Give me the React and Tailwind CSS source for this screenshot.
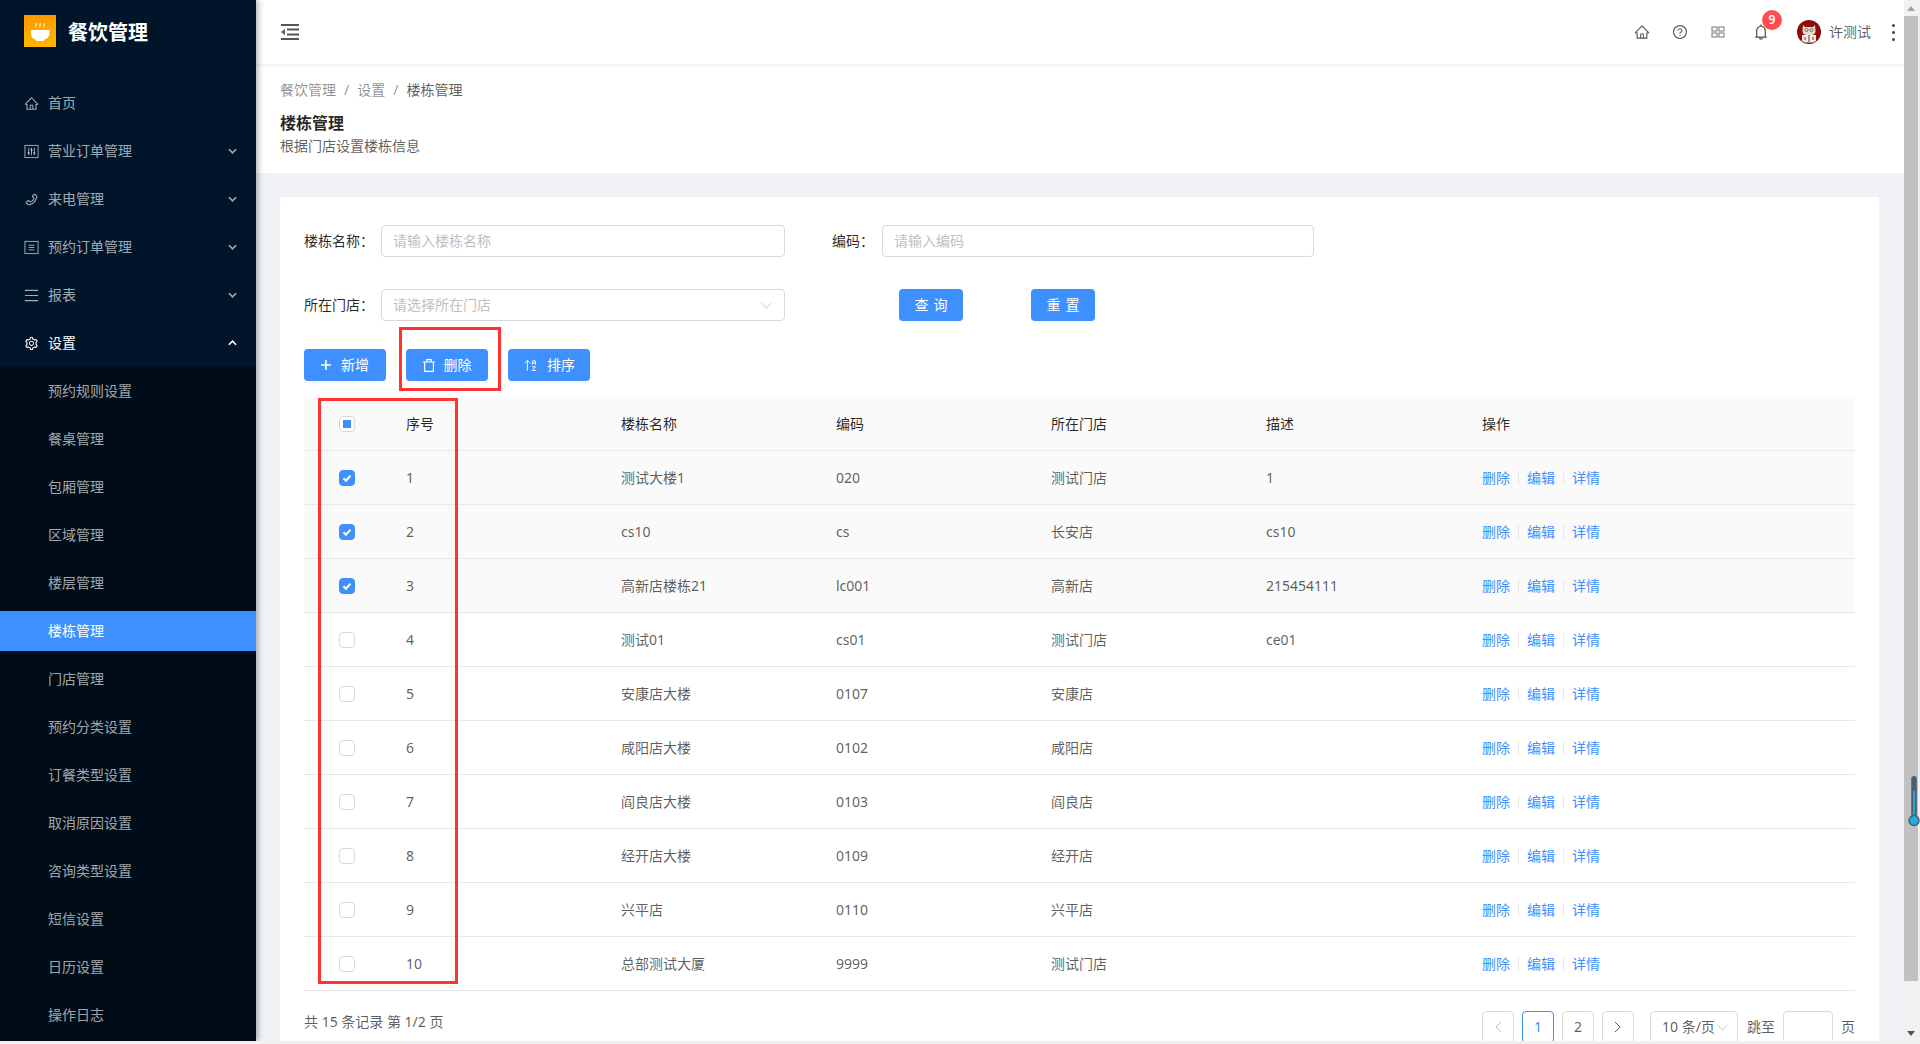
import React from 'react';
import { AiOutlineHome, AiOutlineSetting, AiOutlinePhone, AiOutlineQuestionCircle, AiOutlineBell } from 'react-icons/ai';
import { ArrowUpAZ } from 'lucide-react';

const SlidersIcon = () => (
  <svg viewBox="0 0 16 16" className="w-[15px] h-[15px]" fill="none" stroke="currentColor">
    <rect x="1" y="1.5" width="14" height="13" />
    <path d="M5 4v8M8 4v8M11 4v8" />
    <path d="M4 9.5h2M7 6.5h2M10 9.5h2" strokeWidth="1.6" />
  </svg>
);

const ProfileIcon = () => (
  <svg viewBox="0 0 16 16" className="w-[15px] h-[15px]" fill="none" stroke="currentColor">
    <rect x="1" y="1.5" width="14" height="13" />
    <path d="M5 5.5h6M5 8h6M5 10.5h6" />
  </svg>
);

const LinesIcon = () => (
  <svg viewBox="0 0 16 16" className="w-[15px] h-[15px]" fill="none" stroke="currentColor" strokeWidth="1.3">
    <path d="M1 2.5h14M1 8h14M1 13.5h14" />
  </svg>
);

const Chevron = ({ up, className }) => (
  <svg viewBox="0 0 10 6" className={`w-[9px] h-[6px] ${className}`} fill="none" stroke="currentColor" strokeWidth="1.7">
    <path d={up ? 'M1 5l4-4 4 4' : 'M1 1l4 4 4-4'} />
  </svg>
);

const TrashIcon = () => (
  <svg viewBox="0 0 12 13" className="w-3 h-[13px]" fill="none" stroke="currentColor" strokeWidth="1.2">
    <path d="M0 3h12M1.600 3v9.400h8.800V3M3.800 3V.7h4.400V3" />
  </svg>
);

const PlusIcon = () => (
  <svg viewBox="0 0 10 10" className="w-[10px] h-[10px]" fill="none" stroke="currentColor" strokeWidth="1.6">
    <path d="M5 0v10M0 5h10" />
  </svg>
);

const FoldIcon = () => (
  <svg viewBox="0 0 18 16" className="w-[18px] h-4 ml-px text-[#555]" fill="currentColor">
    <path d="M0 0h18v2H0zM0 14h18v2H0zM6 4.600h12v1.800H6zM6 9.600h12v1.800H6zM0 8l4-3v6z" />
  </svg>
);

const Logo = () => (
  <div className="w-8 h-8 bg-gradient-to-b from-[#ff9800] to-[#ffb700] flex items-center justify-center shrink-0">
    <svg viewBox="0 0 32 32" className="w-8 h-8">
      <path d="M7 15h18.5v3.5c0 3.500-2.500 5.500-5 6l-1 1.500h-7l-1-1.500c-2.500-.5-4.500-2.500-4.500-6z" fill="#fff" />
      <path d="M12 12.500c-1-1.500 1-2.500 0-4.500M16 12.500c-1-1.500 1-2.500 0-4.500M20 12.500c-1-1.500 1-2.500 0-4.500" stroke="#fff" strokeWidth="1.100" fill="none" opacity=".85" />
    </svg>
  </div>
);

const Avatar = () => (
  <svg viewBox="0 0 24 24" className="w-6 h-6 shrink-0">
    <circle cx="12" cy="12" r="12" fill="#8e0c0c" />
    <path d="M6 5l2 2h8l2-2 .5 6c0 3-3 4.500-6.500 4.500S5.500 14 5.500 11z" fill="#e9ddd0" />
    <circle cx="9.500" cy="10" r="1.600" fill="none" stroke="#444" strokeWidth=".7" />
    <circle cx="14.500" cy="10" r="1.600" fill="none" stroke="#444" strokeWidth=".7" />
    <path d="M5 15h14v6l-3 1.500H8L5 21z" fill="#f1ece4" />
    <path d="M12 15v7M8 17v3M16 17v3" stroke="#333" strokeWidth=".9" />
  </svg>
);

const topMenu = [
  { name: '首页', icon: <AiOutlineHome className="w-[15px] h-[15px]" /> },
  { name: '营业订单管理', icon: <SlidersIcon />, arrow: true },
  { name: '来电管理', icon: <AiOutlinePhone className="w-[15px] h-[15px]" />, arrow: true },
  { name: '预约订单管理', icon: <ProfileIcon />, arrow: true },
  { name: '报表', icon: <LinesIcon />, arrow: true },
];

const subMenu = ['预约规则设置', '餐桌管理', '包厢管理', '区域管理', '楼层管理', '楼栋管理', '门店管理', '预约分类设置', '订餐类型设置', '取消原因设置', '咨询类型设置', '短信设置', '日历设置', '操作日志'];

const rows = [
  ['测试大楼1', '020', '测试门店', '1', true],
  ['cs10', 'cs', '长安店', 'cs10', true],
  ['高新店楼栋21', 'lc001', '高新店', '215454111', true],
  ['测试01', 'cs01', '测试门店', 'ce01'],
  ['安康店大楼', '0107', '安康店', ''],
  ['咸阳店大楼', '0102', '咸阳店', ''],
  ['阎良店大楼', '0103', '阎良店', ''],
  ['经开店大楼', '0109', '经开店', ''],
  ['兴平店', '0110', '兴平店', ''],
  ['总部测试大厦', '9999', '测试门店', ''],
];

const Sidebar = () => (
  <aside className="w-64 shrink-0 bg-[#001529] flex flex-col overflow-hidden shadow-[2px_0_6px_rgba(0,21,41,0.35)] z-10">
    <div className="h-[79px] shrink-0 pl-6 pt-[15px] flex items-start gap-3">
      <Logo />
      <span className="text-white text-xl font-bold leading-8 mt-[2px]">餐饮管理</span>
    </div>
    {topMenu.map((item) => (
      <div key={item.name} className="h-12 shrink-0 flex items-center pl-6 pr-[19px] text-[#ffffffa6] text-sm">
        <span className="w-6 flex">{item.icon}</span>
        <span className="flex-1">{item.name}</span>
        {item.arrow && <Chevron />}
      </div>
    ))}
    <div className="h-12 shrink-0 flex items-center pl-6 pr-[19px] text-white text-sm">
      <span className="w-6 flex"><AiOutlineSetting className="w-[15px] h-[15px]" /></span>
      <span className="flex-1">设置</span>
      <Chevron up />
    </div>
    <div className="bg-[#000c17] flex-1 flex flex-col">
      {subMenu.map((name) => (
        <div key={name} className={`h-10 my-1 shrink-0 flex items-center pl-12 text-sm ${name === '楼栋管理' ? 'bg-[#3f90ff] text-white' : 'text-[#ffffffa6]'}`}>
          {name}
        </div>
      ))}
    </div>
  </aside>
);

const Header = () => (
  <header className="h-16 shrink-0 bg-white shadow-[0_1px_4px_rgba(0,21,41,0.08)] z-[5] flex items-center pl-6 text-[#000000a6]">
    <FoldIcon />
    <div className="ml-auto flex items-center">
      <AiOutlineHome className="w-4 h-4 text-[#555]" />
      <AiOutlineQuestionCircle className="w-4 h-4 text-[#555] ml-[22px]" />
      <svg viewBox="0 0 14 12" className="w-[14px] h-[12px] ml-[23px] text-[#777]" fill="none" stroke="currentColor">
        <rect x="1" y="1" width="5" height="4" />
        <rect x="8" y="1" width="5" height="4" />
        <rect x="1" y="7" width="5" height="4" />
        <rect x="8" y="7" width="5" height="4" />
      </svg>
      <div className="relative ml-[27px] flex">
        <AiOutlineBell className="w-[18px] h-[18px] text-[#555]" />
        <span className="absolute -top-[13px] left-[10px] w-5 h-5 rounded-full bg-[#ff4d4f] text-white text-xs font-semibold flex items-center justify-center">9</span>
      </div>
      <div className="ml-[27px]"><Avatar /></div>
      <span className="ml-2 text-sm">许测试</span>
      <div className="ml-[21px] mr-[9px] flex flex-col gap-[4px]">
        <span className="w-[3px] h-[3px] rounded-full bg-[#444]" />
        <span className="w-[3px] h-[3px] rounded-full bg-[#444]" />
        <span className="w-[3px] h-[3px] rounded-full bg-[#444]" />
      </div>
    </div>
  </header>
);

const PageHead = () => (
  <div className="h-[109px] shrink-0 bg-white pl-6 pt-[15px]">
    <div className="flex items-center text-sm leading-[22px] text-[#00000073]">
      <span>餐饮管理</span>
      <span className="mx-2">/</span>
      <span>设置</span>
      <span className="mx-2">/</span>
      <span className="text-[#000000a6]">楼栋管理</span>
    </div>
    <h1 className="text-base font-semibold leading-6 mt-[10px] text-[#000000d9]">楼栋管理</h1>
    <p className="text-sm leading-[22px] text-[#000000a6]">根据门店设置楼栋信息</p>
  </div>
);

const Field = ({ label, labelClass, width, placeholder, select }) => (
  <>
    <label className={`text-sm text-[#000000d9] shrink-0 ${labelClass}`}>{label}</label>
    <div className={`h-8 border border-[#d9d9d9] rounded px-[11px] flex items-center justify-between text-sm text-[#bfbfbf] ${width}`}>
      <span>{placeholder}</span>
      {select && (
        <svg viewBox="0 0 12 8" className="w-[11px] h-[7px] mr-[1px]" fill="none" stroke="#bfbfbf">
          <path d="M.5 1l5.500 6 5.500-6" />
        </svg>
      )}
    </div>
  </>
);

const Btn = ({ children, className = '' }) => (
  <button className={`h-8 bg-[#3f90ff] text-white rounded text-sm flex items-center justify-center shadow-[0_2px_0_rgba(0,0,0,0.03)] ${className}`}>
    {children}
  </button>
);

const Check = ({ checked, half }) => (
  <span className={`w-4 h-4 rounded-sm border flex items-center justify-center ${checked ? 'bg-[#3f90ff] border-[#3f90ff]' : 'bg-white border-[#d9d9d9]'}`}>
    {checked && (
      <svg viewBox="0 0 12 12" className="w-3 h-3" fill="none" stroke="#fff" strokeWidth="2">
        <path d="M2.500 6.200l2.500 2.500 4.500-5" />
      </svg>
    )}
    {half && <span className="w-2 h-2 bg-[#3f90ff]" />}
  </span>
);

const gridCols = 'grid grid-cols-[102px_215px_215px_215px_215px_216px_1fr] items-center';

const Table = () => (
  <div className="relative mt-4">
    <div className={`${gridCols} h-[54px] bg-[#fafafa] border-b border-[#e8e8e8] text-sm text-[#000000d9]`}>
      <span className="pl-[35px]"><Check half /></span>
      <span>序号</span>
      <span>楼栋名称</span>
      <span>编码</span>
      <span>所在门店</span>
      <span>描述</span>
      <span>操作</span>
    </div>
    {rows.map((r, i) => (
      <div key={i} className={`${gridCols} h-[54px] border-b border-[#e8e8e8] text-sm text-[#000000a6] ${r[4] ? 'bg-[#fafafa]' : 'bg-white'}`}>
        <span className="pl-[35px]"><Check checked={r[4]} /></span>
        <span>{i + 1}</span>
        <span>{r[0]}</span>
        <span>{r[1]}</span>
        <span>{r[2]}</span>
        <span>{r[3]}</span>
        <span className="flex items-center text-[#3f90ff]">
          删除<i className="w-px h-[14px] bg-[#e8e8e8] mx-2" />编辑<i className="w-px h-[14px] bg-[#e8e8e8] mx-2" />详情
        </span>
      </div>
    ))}
    <div className="absolute left-[14px] top-[1px] w-[140px] h-[586px] border-[3px] border-[#ff3333] pointer-events-none" />
  </div>
);

const PageBtn = ({ children, className = '' }) => (
  <span className={`h-8 w-8 rounded border flex items-center justify-center text-sm ${className}`}>{children}</span>
);

const Pager = () => (
  <div className="flex justify-between mt-5 text-sm text-[#000000a6]">
    <span className="leading-[22px]">共 15 条记录 第 1/2 页</span>
    <div className="flex items-center h-8">
      <PageBtn className="border-[#d9d9d9] text-[#bfbfbf]">
        <svg viewBox="0 0 8 12" className="w-2 h-3" fill="none" stroke="currentColor"><path d="M7 1L2 6l5 5" /></svg>
      </PageBtn>
      <PageBtn className="ml-2 border-[#3f90ff] text-[#3f90ff]">1</PageBtn>
      <PageBtn className="ml-2 border-[#d9d9d9]">2</PageBtn>
      <PageBtn className="ml-2 border-[#d9d9d9]">
        <svg viewBox="0 0 8 12" className="w-2 h-3" fill="none" stroke="currentColor"><path d="M1 1l5 5-5 5" /></svg>
      </PageBtn>
      <span className="ml-4 h-8 w-[88px] border border-[#d9d9d9] rounded flex items-center pl-[11px] gap-[2px]">
        <span className="whitespace-nowrap">10 条/页</span>
        <svg viewBox="0 0 12 8" className="w-[11px] h-[7px]" fill="none" stroke="#bfbfbf"><path d="M.5 1l5.500 6 5.500-6" /></svg>
      </span>
      <span className="ml-[9px]">跳至</span>
      <span className="ml-2 h-8 w-[50px] border border-[#d9d9d9] rounded" />
      <span className="ml-2">页</span>
    </div>
  </div>
);

const Card = () => (
  <div className="bg-white pl-6 pr-6 pt-7 flex-1 min-h-[900px]">
    <div className="flex items-center">
      <Field label="楼栋名称：" labelClass="w-[77px]" width="w-[404px]" placeholder="请输入楼栋名称" />
      <Field label="编码：" labelClass="w-[50px] ml-[47px]" width="w-[432px]" placeholder="请输入编码" />
    </div>
    <div className="flex items-center mt-8">
      <Field label="所在门店：" labelClass="w-[77px]" width="w-[404px]" placeholder="请选择所在门店" select />
      <Btn className="w-16 ml-[114px]"><span className="tracking-[5px] -mr-[5px]">查询</span></Btn>
      <Btn className="w-16 ml-[68px]"><span className="tracking-[5px] -mr-[5px]">重置</span></Btn>
    </div>
    <div className="flex items-center mt-7 gap-5">
      <Btn className="w-[82px] gap-[10px]"><PlusIcon />新增</Btn>
      <div className="relative">
        <Btn className="w-[82px] gap-[9px]"><TrashIcon />删除</Btn>
        <div className="absolute -left-[7px] -top-[22px] w-[102px] h-16 border-[3px] border-[#ff3333] pointer-events-none" />
      </div>
      <Btn className="w-[82px] gap-[9px]"><ArrowUpAZ className="w-[15px] h-[15px]" strokeWidth={1.5} />排序</Btn>
    </div>
    <Table />
    <Pager />
  </div>
);

const ScrollBar = () => (
  <div className="w-4 shrink-0 bg-[#f1f1f1] flex flex-col items-start relative">
    <div className="h-4 w-full flex items-center justify-center pr-[2px]">
      <span className="border-x-[4px] border-x-transparent border-b-[5px] border-b-[#a3a3a3]" />
    </div>
    <div className="w-[14px] h-[965px] bg-[#c1c1c1]" />
    <div className="flex-1" />
    <div className="h-4 w-full flex items-center justify-center pr-[2px]">
      <span className="border-x-[4px] border-x-transparent border-t-[5px] border-t-[#505050]" />
    </div>
    {/* thermometer widget sitting on the scrollbar */}
    <svg viewBox="0 0 14 56" className="absolute left-1 top-[773px] w-[13px] h-[56px]">
      <rect x="3.500" y="1" width="6" height="46" rx="3" fill="#4a6070" />
      <rect x="5.500" y="17" width="2" height="32" fill="#29abe2" />
      <circle cx="6.500" cy="49" r="5.300" fill="#29abe2" stroke="#4a6070" strokeWidth="1.600" />
    </svg>
  </div>
);

const App = () => {
  return (
    <div className="w-[1920px] h-[1044px] overflow-hidden flex flex-col bg-[#f0f0f0] font-['Noto_Sans','Noto_Sans_CJK_SC',sans-serif]">
      <div className="h-[1041px] shrink-0 flex overflow-hidden">
        <Sidebar />
        <main className="flex-1 min-w-0 flex flex-col bg-[#f0f2f5] overflow-hidden">
          <Header />
          <PageHead />
          <div className="flex-1 flex flex-col pl-6 pr-[25px] pt-6 overflow-hidden">
            <Card />
          </div>
        </main>
        <ScrollBar />
      </div>
    </div>
  );
};

export default App;
